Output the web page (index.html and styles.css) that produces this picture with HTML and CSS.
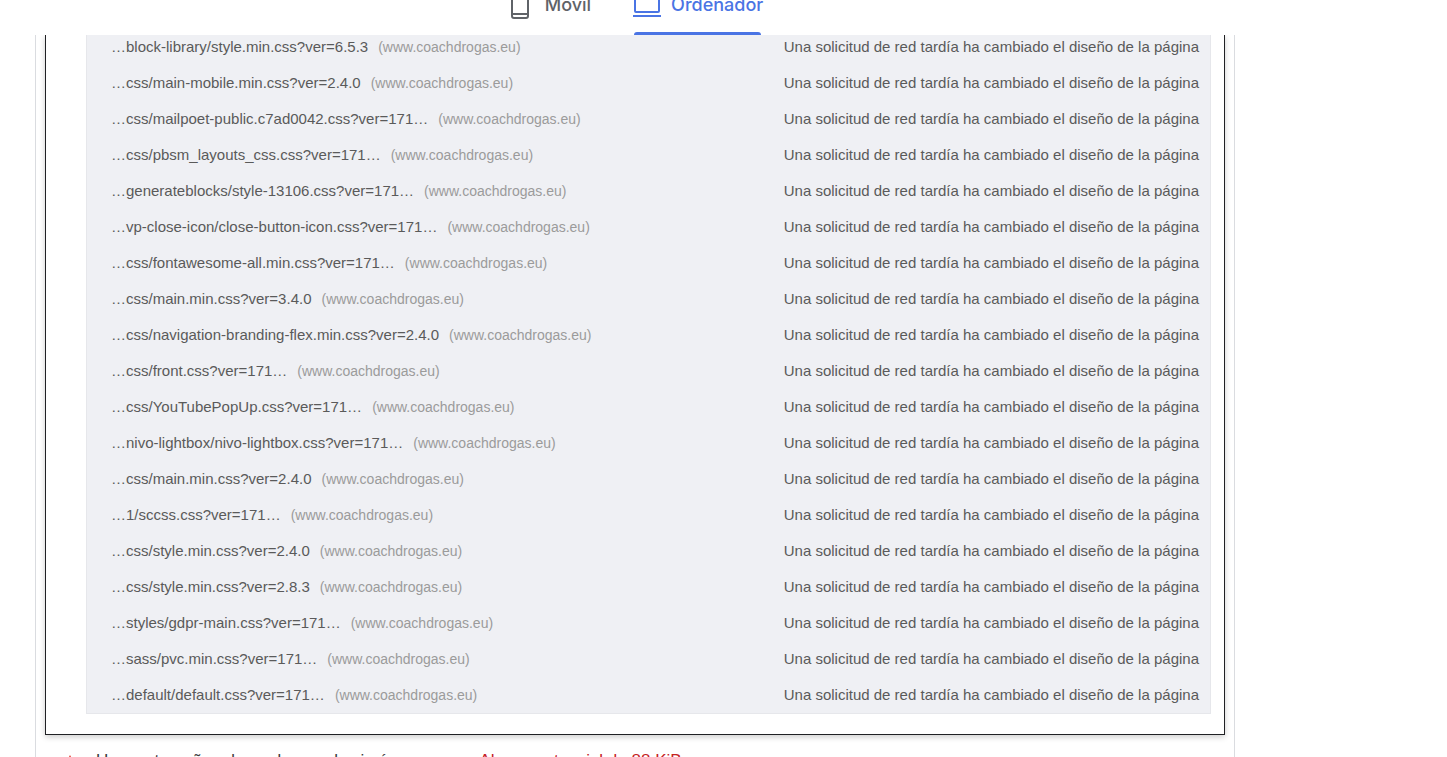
FILE: index.html
```html
<!DOCTYPE html>
<html lang="es">
<head>
<meta charset="utf-8">
<meta name="viewport" content="width=device-width, initial-scale=1">
<title>PageSpeed Insights</title>
<link rel="stylesheet" href="styles.css">
</head>
<body>
<header class="topbar">
  <nav class="tabs">
    <button class="tab" type="button">
      <svg class="tab-icon" viewBox="0 0 24 24" aria-hidden="true"><rect x="4" y="0" width="16" height="25" rx="2" fill="none" stroke="currentColor" stroke-width="2"/><path d="M5 21h14" stroke="currentColor" stroke-width="2"/></svg>
      <span>Móvil</span>
    </button>
    <button class="tab tab-active" type="button">
      <svg class="tab-icon tab-icon-wide" viewBox="0 0 28 24" aria-hidden="true"><rect x="2" y="0" width="24" height="19" rx="1" fill="none" stroke="currentColor" stroke-width="2"/><path d="M0 23h28" stroke="currentColor" stroke-width="2"/></svg>
      <span>Ordenador</span>
    </button>
  </nav>
</header>
<main class="report">
  <section class="audit">
    <table class="requests">
      <tbody>
        <tr><td><a>…block-library/style.min.css?ver=6.5.3</a><span class="host">(www.coachdrogas.eu)</span></td><td>Una solicitud de red tardía ha cambiado el diseño de la página</td></tr>
        <tr><td><a>…css/main-mobile.min.css?ver=2.4.0</a><span class="host">(www.coachdrogas.eu)</span></td><td>Una solicitud de red tardía ha cambiado el diseño de la página</td></tr>
        <tr><td><a>…css/mailpoet-public.c7ad0042.css?ver=171…</a><span class="host">(www.coachdrogas.eu)</span></td><td>Una solicitud de red tardía ha cambiado el diseño de la página</td></tr>
        <tr><td><a>…css/pbsm_layouts_css.css?ver=171…</a><span class="host">(www.coachdrogas.eu)</span></td><td>Una solicitud de red tardía ha cambiado el diseño de la página</td></tr>
        <tr><td><a>…generateblocks/style-13106.css?ver=171…</a><span class="host">(www.coachdrogas.eu)</span></td><td>Una solicitud de red tardía ha cambiado el diseño de la página</td></tr>
        <tr><td><a>…vp-close-icon/close-button-icon.css?ver=171…</a><span class="host">(www.coachdrogas.eu)</span></td><td>Una solicitud de red tardía ha cambiado el diseño de la página</td></tr>
        <tr><td><a>…css/fontawesome-all.min.css?ver=171…</a><span class="host">(www.coachdrogas.eu)</span></td><td>Una solicitud de red tardía ha cambiado el diseño de la página</td></tr>
        <tr><td><a>…css/main.min.css?ver=3.4.0</a><span class="host">(www.coachdrogas.eu)</span></td><td>Una solicitud de red tardía ha cambiado el diseño de la página</td></tr>
        <tr><td><a>…css/navigation-branding-flex.min.css?ver=2.4.0</a><span class="host">(www.coachdrogas.eu)</span></td><td>Una solicitud de red tardía ha cambiado el diseño de la página</td></tr>
        <tr><td><a>…css/front.css?ver=171…</a><span class="host">(www.coachdrogas.eu)</span></td><td>Una solicitud de red tardía ha cambiado el diseño de la página</td></tr>
        <tr><td><a>…css/YouTubePopUp.css?ver=171…</a><span class="host">(www.coachdrogas.eu)</span></td><td>Una solicitud de red tardía ha cambiado el diseño de la página</td></tr>
        <tr><td><a>…nivo-lightbox/nivo-lightbox.css?ver=171…</a><span class="host">(www.coachdrogas.eu)</span></td><td>Una solicitud de red tardía ha cambiado el diseño de la página</td></tr>
        <tr><td><a>…css/main.min.css?ver=2.4.0</a><span class="host">(www.coachdrogas.eu)</span></td><td>Una solicitud de red tardía ha cambiado el diseño de la página</td></tr>
        <tr><td><a>…1/sccss.css?ver=171…</a><span class="host">(www.coachdrogas.eu)</span></td><td>Una solicitud de red tardía ha cambiado el diseño de la página</td></tr>
        <tr><td><a>…css/style.min.css?ver=2.4.0</a><span class="host">(www.coachdrogas.eu)</span></td><td>Una solicitud de red tardía ha cambiado el diseño de la página</td></tr>
        <tr><td><a>…css/style.min.css?ver=2.8.3</a><span class="host">(www.coachdrogas.eu)</span></td><td>Una solicitud de red tardía ha cambiado el diseño de la página</td></tr>
        <tr><td><a>…styles/gdpr-main.css?ver=171…</a><span class="host">(www.coachdrogas.eu)</span></td><td>Una solicitud de red tardía ha cambiado el diseño de la página</td></tr>
        <tr><td><a>…sass/pvc.min.css?ver=171…</a><span class="host">(www.coachdrogas.eu)</span></td><td>Una solicitud de red tardía ha cambiado el diseño de la página</td></tr>
        <tr><td><a>…default/default.css?ver=171…</a><span class="host">(www.coachdrogas.eu)</span></td><td>Una solicitud de red tardía ha cambiado el diseño de la página</td></tr>
      </tbody>
    </table>
  </section>
  <div class="next-audit">
    <svg class="warning" viewBox="0 0 12 12" aria-hidden="true"><path d="M6 0l6 12H0z" fill="#e33b2e"/></svg>
    <span class="next-title">Usa un tamaño adecuado para las imágenes</span>
    <span class="savings">Ahorro potencial de 88 KiB</span>
  </div>
</main>
</body>
</html>
```
FILE: styles.css
```css
* { box-sizing: border-box; }

body {
  margin: 0;
  height: 100vh;
  overflow: hidden;
  display: flex;
  flex-direction: column;
  background: #fff;
  color: #5a5a5a;
  font: 15px/20px "Liberation Sans", Arial, sans-serif;
}

.topbar {
  flex: none;
  height: 35px;
  overflow: hidden;
  display: flex;
  align-items: flex-end;
  justify-content: center;
  padding-right: 176px;
}

.tabs { display: flex; gap: 42px; }

.tab {
  position: relative;
  display: flex;
  align-items: center;
  gap: 13px;
  height: 60px;
  padding: 0;
  border: 0;
  background: none;
  color: #5f6368;
  font: 500 18px/24px Inter, sans-serif;
}

.tab-active { gap: 10px; color: #4a74e4; }

.tab-active::after {
  content: "";
  position: absolute;
  left: 1px;
  right: 2px;
  bottom: 0;
  height: 3px;
  border-radius: 3px 3px 0 0;
  background: #4a74e4;
}

.tab-icon { width: 24px; height: 24px; overflow: visible; }
.tab-icon-wide { width: 28px; }

.report {
  flex: 1;
  min-height: 0;
  overflow: hidden;
  width: 1200px;
  max-width: calc(100% - 35px);
  margin-left: 35px;
  padding: 0 9px;
  border: solid #dadce0;
  border-width: 0 1px;
}

.audit {
  padding: 0 13px 20px 40px;
  border: 1px solid #202124;
  border-top: 0;
  box-shadow: 0 2px 6px rgba(0, 0, 0, 0.2);
}

.requests {
  width: 100%;
  border-collapse: separate;
  border-spacing: 0;
  border: 1px solid #e6e7eb;
  border-top: 0;
  background: #eff0f4;
}

td { height: 36px; padding: 8px 11px 8px 24px; white-space: nowrap; }
tr:first-child td { height: 30px; padding-top: 2px; }
td:last-child { text-align: right; }

.host { margin-left: 10px; color: #9b9b9b; font-size: 14px; }

.next-audit {
  display: flex;
  align-items: center;
  padding: 14px 0 0 19px;
  color: #3c3c3c;
  font-size: 17px;
  line-height: 24px;
}

.warning { width: 12px; height: 16px; margin-right: 20px; }
.next-title { margin-right: 45px; }
.savings { color: #c5221f; }
```
